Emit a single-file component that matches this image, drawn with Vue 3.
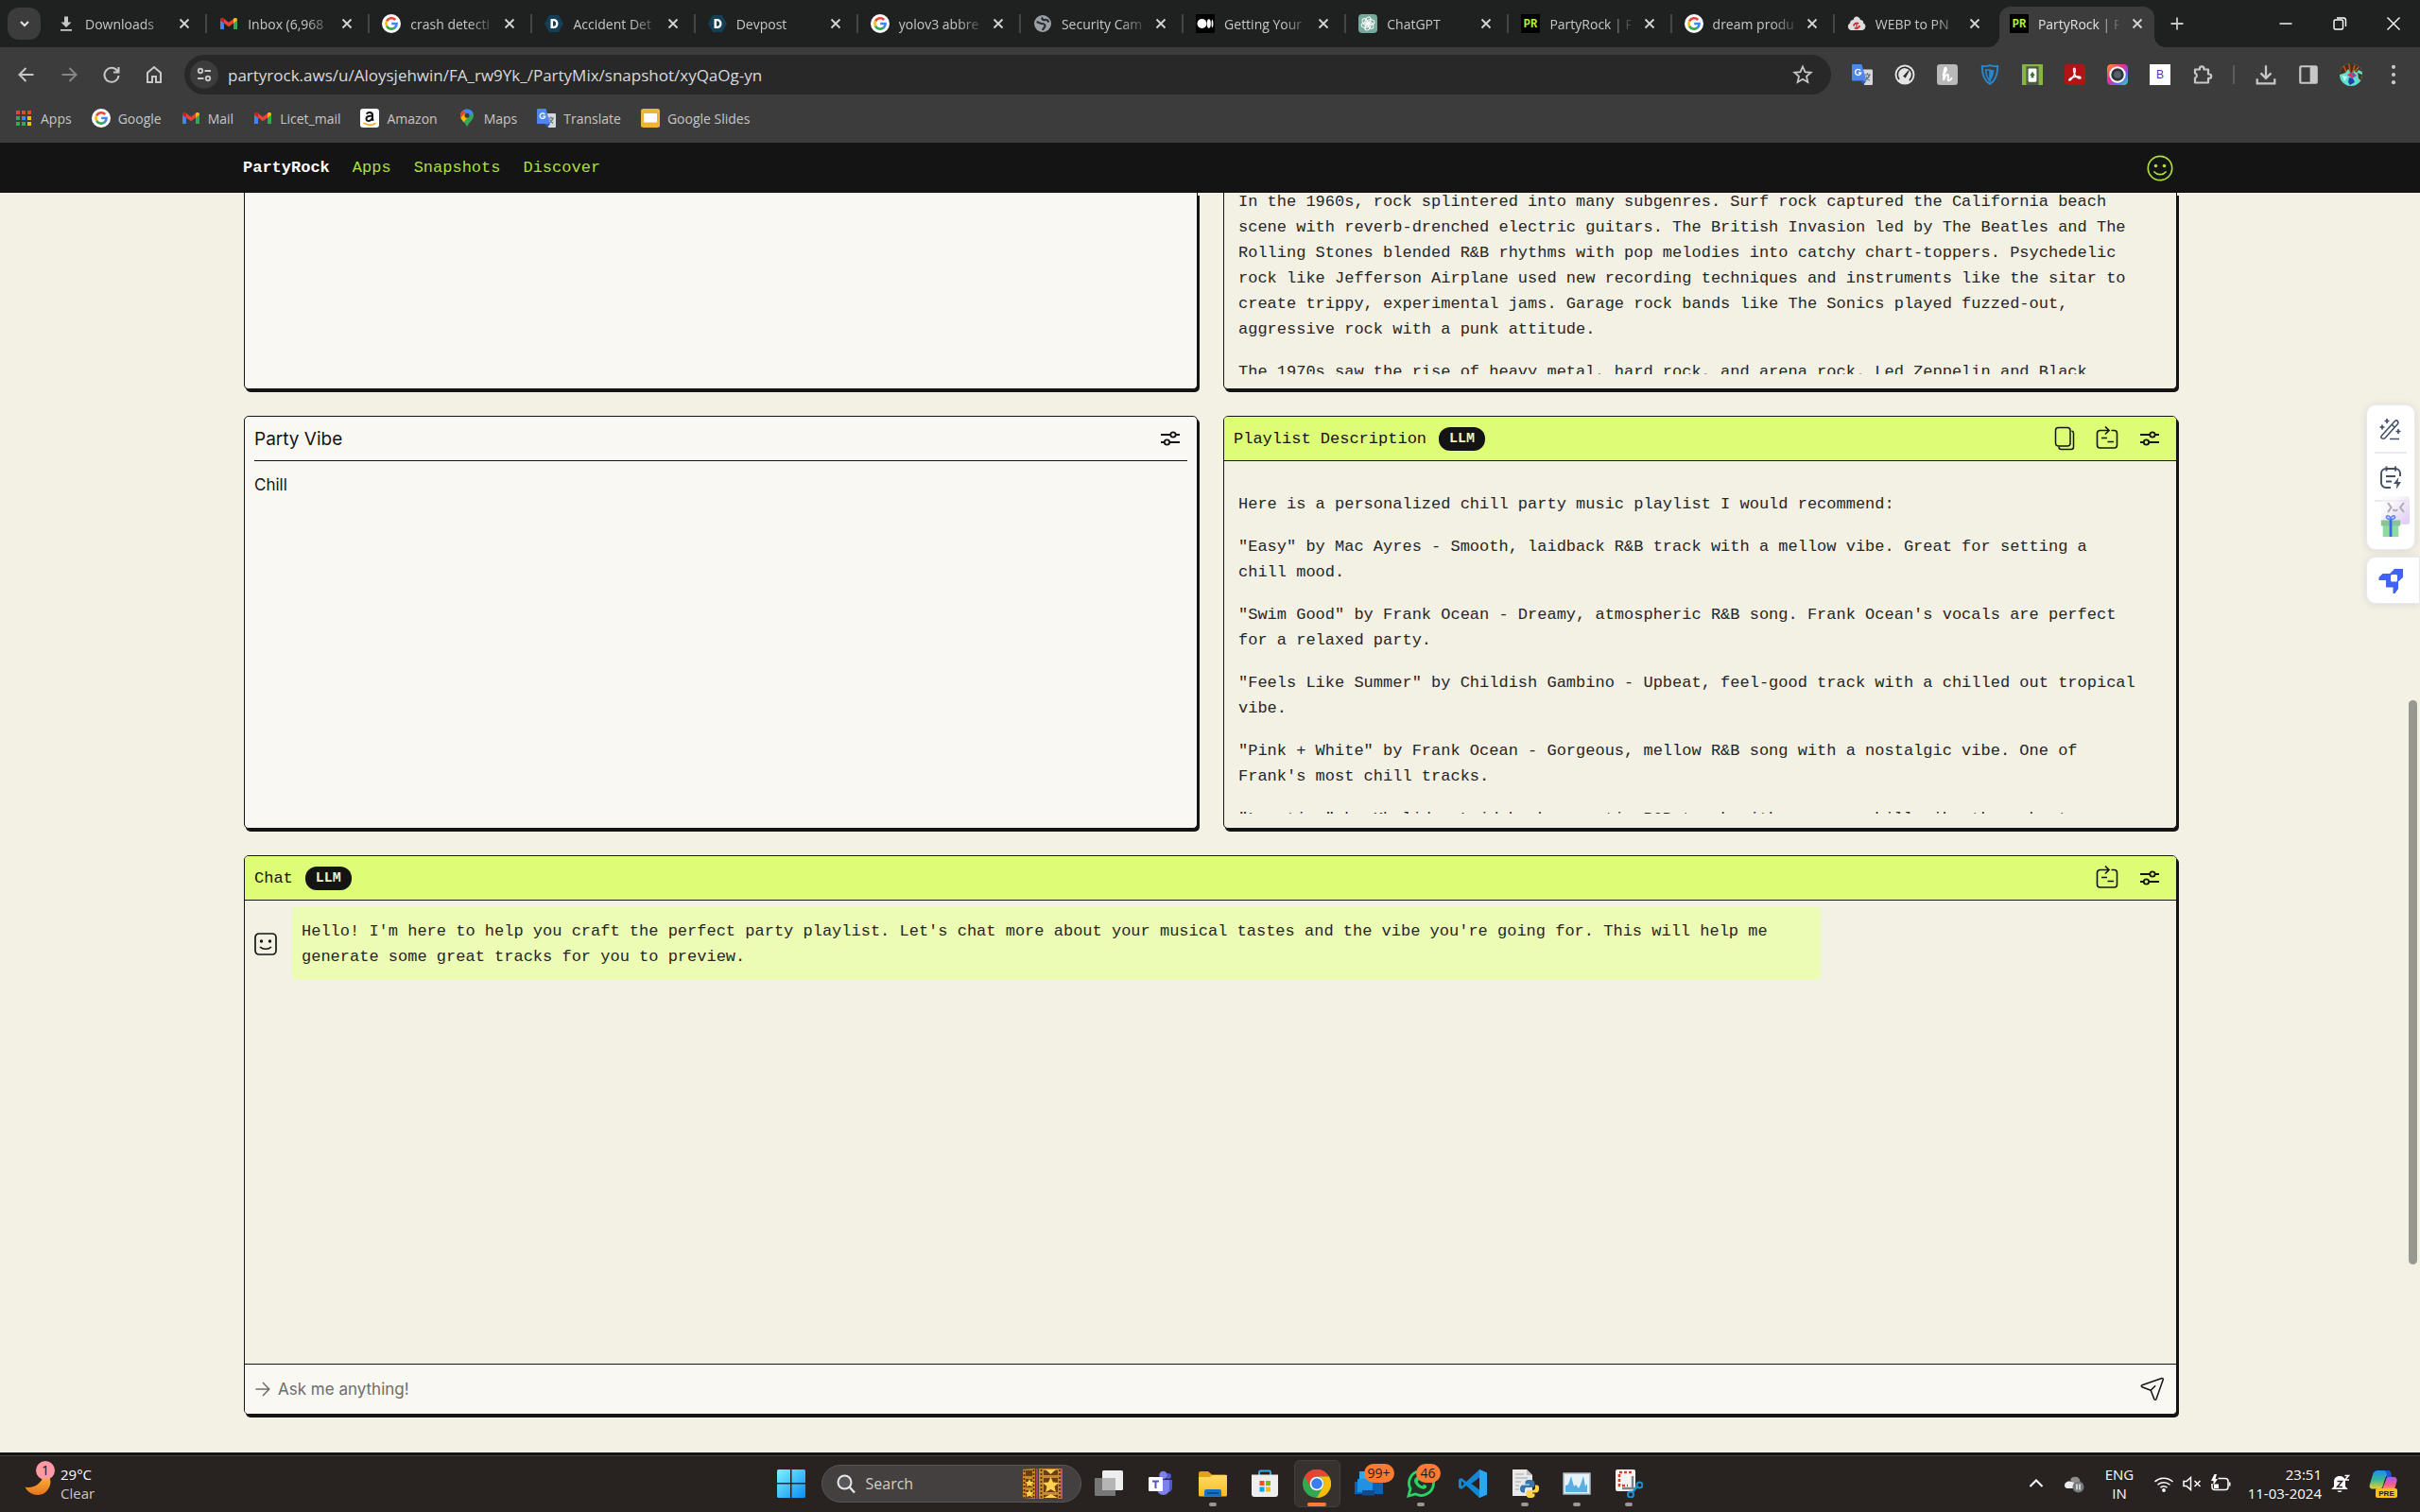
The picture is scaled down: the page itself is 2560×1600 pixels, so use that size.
<script setup>
import { ref } from 'vue'

const tabs = [
  { title: 'Downloads', icon: 'download-bar' },
  { title: 'Inbox (6,968', icon: 'gmail' },
  { title: 'crash detecti', icon: 'google' },
  { title: 'Accident Det', icon: 'devpost' },
  { title: 'Devpost', icon: 'devpost' },
  { title: 'yolov3 abbre', icon: 'google' },
  { title: 'Security Cam', icon: 'globe' },
  { title: 'Getting Your', icon: 'medium' },
  { title: 'ChatGPT', icon: 'chatgpt' },
  { title: 'PartyRock | P', icon: 'partyrock' },
  { title: 'dream produ', icon: 'google' },
  { title: 'WEBP to PN', icon: 'cloudconvert' },
  { title: 'PartyRock | P', icon: 'partyrock', active: true },
]

const bookmarks = [
  { title: 'Apps', icon: 'apps' },
  { title: 'Google', icon: 'google' },
  { title: 'Mail', icon: 'gmail' },
  { title: 'Licet_mail', icon: 'gmail' },
  { title: 'Amazon', icon: 'amazon' },
  { title: 'Maps', icon: 'maps' },
  { title: 'Translate', icon: 'translate' },
  { title: 'Google Slides', icon: 'slides' },
]

const navButtons = [
  { label: 'Back', icon: 'back' },
  { label: 'Forward', icon: 'forward', dim: true },
  { label: 'Reload', icon: 'reload' },
  { label: 'Home', icon: 'home' },
]

const extensions = [
  { label: 'Google Translate', icon: 'translate' },
  { label: 'Speed test', icon: 'gauge' },
  { label: 'Honey', icon: 'honey' },
  { label: 'VPN', icon: 'shield' },
  { label: 'Solitaire', icon: 'cards' },
  { label: 'Adobe Acrobat', icon: 'acrobat' },
  { label: 'Camera', icon: 'lens' },
  { label: 'Bookmarklet', icon: 'boxb' },
  { label: 'Extensions', icon: 'puzzle' },
]

const browserTools = [
  { label: 'Downloads', icon: 'tray' },
  { label: 'Side panel', icon: 'panel' },
  { label: 'Profile', icon: 'profile' },
  { label: 'Menu', icon: 'dots' },
]

const siteLinks = ['Apps', 'Snapshots', 'Discover']

const history = [
  `In the 1960s, rock splintered into many subgenres. Surf rock captured the California beach
scene with reverb-drenched electric guitars. The British Invasion led by The Beatles and The
Rolling Stones blended R&B rhythms with pop melodies into catchy chart-toppers. Psychedelic
rock like Jefferson Airplane used new recording techniques and instruments like the sitar to
create trippy, experimental jams. Garage rock bands like The Sonics played fuzzed-out,
aggressive rock with a punk attitude.`,
  'The 1970s saw the rise of heavy metal, hard rock, and arena rock. Led Zeppelin and Black',
]

const playlist = [
  'Here is a personalized chill party music playlist I would recommend:',
  `"Easy" by Mac Ayres - Smooth, laidback R&B track with a mellow vibe. Great for setting a
chill mood.`,
  `"Swim Good" by Frank Ocean - Dreamy, atmospheric R&B song. Frank Ocean's vocals are perfect
for a relaxed party.`,
  `"Feels Like Summer" by Childish Gambino - Upbeat, feel-good track with a chilled out tropical
vibe.`,
  `"Pink + White" by Frank Ocean - Gorgeous, mellow R&B song with a nostalgic vibe. One of
Frank's most chill tracks.`,
  '"Location" by Khalid - Laid-back romantic R&B track with a super chill vibe throughout.',
]

const greeting = `Hello! I'm here to help you craft the perfect party playlist. Let's chat more about your musical tastes and the vibe you're going for. This will help me
generate some great tracks for you to preview.`

const taskApps = [
  { label: 'Task view', icon: 'taskview' },
  { label: 'Teams', icon: 'teams' },
  { label: 'File Explorer', icon: 'explorer', open: true },
  { label: 'Microsoft Store', icon: 'store' },
  { label: 'Chrome', icon: 'chrome', active: true },
  { label: 'Phone Link', icon: 'phone', badge: '99+' },
  { label: 'WhatsApp', icon: 'whatsapp', badge: '46', open: true },
  { label: 'Visual Studio Code', icon: 'vscode' },
  { label: 'Python', icon: 'python', open: true },
  { label: 'Performance Monitor', icon: 'monitor', open: true },
  { label: 'Snipping Tool', icon: 'snip', open: true },
]

const url = ref('partyrock.aws/u/Aloysjehwin/FA_rw9Yk_/PartyMix/snapshot/xyQaOg-yn')
const question = ref('')
const search = ref('')
</script>

<template>
  <div class="screen">
    <svg class="sprite" aria-hidden="true">
      <defs>
        <linearGradient id="g-win" x1="0" y1="0" x2="1" y2="1"><stop offset="0" stop-color="#7cf3ff" /><stop offset="1" stop-color="#0a8df5" /></linearGradient>
        <linearGradient id="g-moon" x1="0" y1="0" x2="0" y2="1"><stop offset="0" stop-color="#ffc83d" /><stop offset="1" stop-color="#e8711c" /></linearGradient>
        <linearGradient id="g-lens" x1="0" y1="0" x2="1" y2="1"><stop offset="0" stop-color="#ff9a2e" /><stop offset=".4" stop-color="#f12c8e" /><stop offset=".7" stop-color="#6c5cf5" /><stop offset="1" stop-color="#2ee6a8" /></linearGradient>
        <linearGradient id="g-folder" x1="0" y1="0" x2="0" y2="1"><stop offset="0" stop-color="#ffdb63" /><stop offset="1" stop-color="#f9b81f" /></linearGradient>
        <linearGradient id="g-cop1" x1="0" y1="0" x2="0" y2="1"><stop offset="0" stop-color="#1f8df0" /><stop offset=".5" stop-color="#36b79a" /><stop offset="1" stop-color="#e9d02c" /></linearGradient>
        <linearGradient id="g-cop2" x1="0" y1="0" x2="0" y2="1"><stop offset="0" stop-color="#a55cf0" /><stop offset=".6" stop-color="#f05a9b" /><stop offset="1" stop-color="#ff9a3d" /></linearGradient>
        <linearGradient id="g-face" x1="0" y1="0" x2="1" y2="1"><stop offset=".3" stop-color="#f6f4fa" /><stop offset="1" stop-color="#c9a5ec" /></linearGradient>
      </defs>

      <symbol id="chev-down" viewBox="0 0 20 20"><path d="M6 8l4 4 4-4" fill="none" stroke="currentColor" stroke-width="2" /></symbol>
      <symbol id="close" viewBox="0 0 20 20"><path d="M5.500 5.500l9 9M14.500 5.500l-9 9" fill="none" stroke="currentColor" stroke-width="1.800" /></symbol>
      <symbol id="plus" viewBox="0 0 20 20"><path d="M10 3.500v13M3.500 10h13" stroke="currentColor" stroke-width="1.800" /></symbol>
      <symbol id="win-min" viewBox="0 0 20 20"><path d="M3.500 10h13" stroke="currentColor" stroke-width="1.400" /></symbol>
      <symbol id="win-max" viewBox="0 0 20 20"><g fill="none" stroke="currentColor" stroke-width="1.400"><rect x="4" y="6" width="9.500" height="10" rx="1.500" /><path d="M7 4h7a2.500 2.500 0 0 1 2.500 2.500V13" /></g></symbol>
      <symbol id="win-close" viewBox="0 0 20 20"><path d="M3.500 3.500l13 13M16.500 3.500l-13 13" stroke="currentColor" stroke-width="1.400" /></symbol>

      <symbol id="download-bar" viewBox="0 0 20 20"><path d="M8 2.500h4v6h3.500L10 14 4.500 8.500H8z M4 16h12v1.800H4z" fill="#c7c7c7" /></symbol>
      <symbol id="gmail" viewBox="0 0 20 20"><path d="M1 5v11h4V8.500z" fill="#4285f4" /><path d="M19 5v11h-4V8.500z" fill="#34a853" /><path d="M1 6.500C1 4 3 3.500 4.500 4.500L10 8.800l5.500-4.300C17 3.500 19 4 19 6.500l-4 3-5 3.800L5 9.500z" fill="#ea4335" /><path d="M1 6.500C1 4 3 3.500 4.500 4.500L5 5v4.500z" fill="#c5221f" /><path d="M15 5l.5-.5C17 3.500 19 4 19 6.500l-4 3z" fill="#fbbc04" /></symbol>
      <symbol id="google" viewBox="0 0 20 20"><circle cx="10" cy="10" r="10" fill="#fff" /><g fill="none" stroke-width="2.600"><path d="M14.200 6a5.600 5.600 0 0 0-9.100 1.400" stroke="#ea4335" /><path d="M5.100 7.300a5.700 5.700 0 0 0 0 5.400" stroke="#fbbc05" /><path d="M5.100 12.600a5.600 5.600 0 0 0 8.600 1.700" stroke="#34a853" /><path d="M10.200 10h5.400c0 2-.7 3.400-2 4.400" stroke="#4285f4" /></g></symbol>
      <symbol id="devpost" viewBox="0 0 20 20"><path d="M5 1h10l5 9-5 9H5l-5-9z" fill="#143f56" /><path d="M6.500 5h3.200c3 0 4.800 2 4.800 5s-1.800 5-4.800 5H6.500zM9 7.200v5.600h.8c1.400 0 2.300-1 2.300-2.800s-.9-2.800-2.300-2.800z" fill="#fff" /></symbol>
      <symbol id="globe" viewBox="0 0 20 20"><circle cx="10" cy="10" r="9" fill="#9aa0a6" /><path d="M3.500 8.500c2.500-.5 3 1.500 5.500 1.500s3.500.5 3.500 2.500-2 2-2.500 4.500M10 3.500c-1.500 2 .5 3 2.500 2.500s3 .5 4 2.500" fill="none" stroke="#2a2c2d" stroke-width="2.200" /></symbol>
      <symbol id="medium" viewBox="0 0 20 20"><rect width="20" height="20" rx="1" fill="#000" /><circle cx="6.500" cy="10" r="5" fill="#fff" /><ellipse cx="13.800" cy="10" rx="2" ry="4.700" fill="#fff" /><ellipse cx="17.500" cy="10" rx=".9" ry="4" fill="#fff" /></symbol>
      <symbol id="chatgpt" viewBox="0 0 20 20"><rect width="20" height="20" rx="4" fill="#75a99c" /><g fill="none" stroke="#fff" stroke-width="1.100"><ellipse v-for="a in [0, 60, 120, 180, 240, 300]" :key="a" cx="10" cy="6.800" rx="2.600" ry="4.100" :transform="`rotate(${a} 10 10) rotate(28 10 6.800)`" /></g></symbol>
      <symbol id="partyrock" viewBox="0 0 20 20"><rect width="20" height="20" fill="#000" /><text x="10" y="14" text-anchor="middle" font-family="Liberation Mono, monospace" font-size="12" font-weight="700" fill="#b6ee3d">PR</text></symbol>
      <symbol id="cloudconvert" viewBox="0 0 20 20"><path d="M4 17a4 4 0 0 1-1-7.500C3 7 5 6 6.500 6 7 3.500 8.500 2.500 10 2.500S13.500 4 14 6c2 0 3.500 1.500 3.200 3.500A4 4 0 0 1 16 17z" fill="#ddd" /><path d="M7 12.500a3 3 0 0 1 5-2.300M13 12a3 3 0 0 1-5 2.300" fill="none" stroke="#c3272b" stroke-width="1.800" /><path d="M10 9.500v6" stroke="#c3272b" stroke-width="1.200" /></symbol>

      <symbol id="back" viewBox="0 0 24 24"><path d="M19.500 12H5M11.500 5L4.500 12l7 7" fill="none" stroke="currentColor" stroke-width="2" /></symbol>
      <symbol id="forward" viewBox="0 0 24 24"><path d="M4.500 12H19M12.500 5l7 7-7 7" fill="none" stroke="currentColor" stroke-width="2" /></symbol>
      <symbol id="reload" viewBox="0 0 24 24"><path d="M18.500 8.500A7.500 7.500 0 1 0 19.500 13M19.500 4v5.500H14" fill="none" stroke="currentColor" stroke-width="2" /></symbol>
      <symbol id="home" viewBox="0 0 24 24"><path d="M5 20V10l7-6 7 6v10h-5v-6h-4v6z" fill="none" stroke="currentColor" stroke-width="2" /></symbol>
      <symbol id="tune" viewBox="0 0 20 20"><g fill="none" stroke="currentColor" stroke-width="1.900"><circle cx="6" cy="6" r="2.200" /><path d="M10.500 6H17M3 14h6.500" /><circle cx="14" cy="14" r="2.200" /></g></symbol>
      <symbol id="star" viewBox="0 0 24 24"><path d="M12 3.500l2.500 5.700 6.200.6-4.700 4.100 1.400 6.100L12 16.800 6.600 20 8 13.900 3.300 9.800l6.200-.6z" fill="none" stroke="currentColor" stroke-width="1.800" /></symbol>
      <symbol id="translate" viewBox="0 0 20 20"><path d="M8 5h11a1 1 0 0 1 1 1v13a1 1 0 0 1-1 1h-7z" fill="#d6d9dc" /><path d="M12 10h6M15 8.500V10M17 10c-.5 2-2 4-4 5M13.500 11.500c.7 1.600 2 3 3.500 4" stroke="#5f6b76" stroke-width="1.100" fill="none" /><path d="M1 0h8.500L14 16H1a1 1 0 0 1-1-1V1a1 1 0 0 1 1-1z" fill="#4f86ec" /><path d="M8.300 6A2.800 2.800 0 1 0 8.800 8.200H6.300" fill="none" stroke="#fff" stroke-width="1.300" /><path d="M8 16h6l-3 4z" fill="#3058b5" /></symbol>
      <symbol id="gauge" viewBox="0 0 20 20"><circle cx="10" cy="10" r="9.500" fill="#e4e4e4" /><circle cx="10" cy="10" r="7" fill="none" stroke="#2c2c2c" stroke-width="1.500" stroke-dasharray="33 11" transform="rotate(140 10 10)" /><path d="M9 11.500L14 6l-3.500 6.500z" fill="#2c2c2c" stroke="#2c2c2c" /></symbol>
      <symbol id="honey" viewBox="0 0 20 20"><rect width="20" height="20" rx="3" fill="#b9b9b9" /><path d="M6 10c2-1 4-6 2.500-6.500S6.500 9 6.500 15.500C7 12 9 9.500 10.500 10S9.500 15 11 15.500s2.500-1 3-2" fill="none" stroke="#fff" stroke-width="1.800" stroke-linecap="round" /></symbol>
      <symbol id="shield" viewBox="0 0 20 20"><path d="M10 1c2 1 5 1 7.500.8 0 8-2 14-7.500 17.200C4.500 15.800 2.500 9.800 2.500 1.800 5 2 8 2 10 1z" fill="none" stroke="#2b87cc" stroke-width="1.700" /><path d="M6 5.500h4V16C7.500 13.500 6.300 10 6 5.500z" fill="none" stroke="#2b87cc" stroke-width="1.400" /><path d="M10 5.500h4c-.3 4.500-1.500 8-4 10.500z" fill="#2b87cc" /></symbol>
      <symbol id="cards" viewBox="0 0 20 20"><rect width="20" height="20" fill="#86b544" /><rect x="4" y="2" width="12" height="18" fill="#4d5b45" /><rect x="6" y="4" width="8" height="13" rx="1" fill="#fff" /><path d="M10 7l2.500 4H11l.5 2h-3l.5-2H7.500z" fill="#2c7a2b" /></symbol>
      <symbol id="acrobat" viewBox="0 0 20 20"><rect width="20" height="20" rx="3.500" fill="#b01414" /><path d="M9 4c1.800-.5 1.500 3 .5 5.500S6 15.500 4.800 15.500s0-2 3.200-3 7.500-1 7.500.5-3.500.5-5-2S8 4.500 9 4z" fill="none" stroke="#fff" stroke-width="1.300" /></symbol>
      <symbol id="lens" viewBox="0 0 20 20"><rect width="20" height="20" rx="4" fill="url(#g-lens)" /><circle cx="10" cy="10" r="7" fill="#31343a" stroke="#fff" stroke-width="1.800" /><circle cx="10" cy="10" r="3.500" fill="#55616f" /></symbol>
      <symbol id="boxb" viewBox="0 0 20 20"><rect width="20" height="20" fill="#fff" /><text x="10" y="14" text-anchor="middle" font-family="Liberation Sans, sans-serif" font-size="11" fill="#3a3fb5">B</text></symbol>
      <symbol id="puzzle" viewBox="0 0 22 22"><path d="M3 5.500h5v-1a2.200 2.200 0 0 1 4.400 0v1H17v5h1a2.200 2.200 0 0 1 0 4.400h-1v4.600H3v-5a2.600 2.600 0 0 0 0-5z" fill="none" stroke="currentColor" stroke-width="2.200" stroke-linejoin="round" /></symbol>
      <symbol id="tray" viewBox="0 0 22 22"><path d="M11 2v12M6 9.500l5 5 5-5M2.500 15v4.500h17V15" fill="none" stroke="currentColor" stroke-width="2.100" /></symbol>
      <symbol id="panel" viewBox="0 0 22 22"><rect x="3" y="3" width="16" height="16" rx="1" fill="none" stroke="currentColor" stroke-width="2" /><path d="M12.500 3H19v16h-6.500z" fill="currentColor" /></symbol>
      <symbol id="profile" viewBox="0 0 24 24"><clipPath id="c-prof"><circle cx="12" cy="12" r="12" /></clipPath><g clip-path="url(#c-prof)"><rect width="24" height="24" fill="#5fe0cd" /><path d="M0 0h24v9l-4-2-2 3-3-3-3 4-3-5-3 4-6 2z" fill="#4a2d1c" /><path d="M4 2l3 7M10 1l1 8M16 2l-2 7M20 4l-4 5" stroke="#c8571f" stroke-width="1.500" /><path d="M8 12l6-3 4 4-5 3z" fill="#d8326b" /><path d="M10 15l4 1 2 4-5 3-2-3z" fill="#1e3fae" /><path d="M13 11l4 1-2 3z" fill="#2478e5" /><path d="M19 10l5 2v8l-4-4z" fill="#4d3a24" /><path d="M3 13l5 1-3 5z" fill="#c4fff3" /></g></symbol>
      <symbol id="dots" viewBox="0 0 22 22"><g fill="currentColor"><circle cx="11" cy="3.500" r="1.900" /><circle cx="11" cy="11" r="1.900" /><circle cx="11" cy="18.500" r="1.900" /></g></symbol>

      <symbol id="apps" viewBox="0 0 20 20"><g v-for="(row, r) in [['#ea4335', '#ea4335', '#ea4335'], ['#34a853', '#4285f4', '#fbbc05'], ['#34a853', '#34a853', '#fbbc05']]" :key="r"><rect v-for="(c, i) in row" :key="i" :x="2 + i * 6" :y="2 + r * 6" width="4" height="4" :fill="c" /></g></symbol>
      <symbol id="amazon" viewBox="0 0 20 20"><rect width="20" height="20" rx="3" fill="#fff" /><path d="M7 5.800c.5-2.400 6-2.600 6 .6v4.200c0 1 .6 1.600 1 2.100M12.800 7.500c-4.500 0-6.300 1-6.300 3.200 0 3.200 5.200 2.900 6.200-.7" fill="none" stroke="#111" stroke-width="2" /><path d="M3.500 15c4 2.800 9 2.800 13 .3" fill="none" stroke="#f90" stroke-width="1.500" /></symbol>
      <symbol id="maps" viewBox="0 0 20 20"><clipPath id="c-pin"><path d="M10 .5c4 0 7 3 7 6.800 0 5-5 6.700-7 12.200-2-5.500-7-7.200-7-12.200C3 3.500 6 .5 10 .5z" /></clipPath><g clip-path="url(#c-pin)"><rect width="20" height="20" fill="#34a853" /><path d="M3 0h14v5l-7 4-7-4z" fill="#4285f4" /><path d="M0 2l5-1 4 4-6 7z" fill="#ea4335" /><path d="M3 10l5-5 3 4-6 7z" fill="#fbbc04" /></g><circle cx="10" cy="7.300" r="2.500" fill="#3c3c3c" /></symbol>
      <symbol id="slides" viewBox="0 0 20 20"><rect width="20" height="20" rx="2.500" fill="#f0b23a" /><rect x="3" y="5" width="14" height="9.500" fill="#fff" /></symbol>

      <symbol id="smiley" viewBox="0 0 28 28"><g fill="none" stroke="currentColor" stroke-width="1.700"><circle cx="14" cy="14" r="12.700" /><path d="M8 18c3 3.500 9 3.500 12 0" stroke-linecap="round" /></g><circle cx="9.500" cy="11.500" r="1.800" fill="currentColor" /><circle cx="18.500" cy="11.500" r="1.800" fill="currentColor" /></symbol>
      <symbol id="bot" viewBox="0 0 24 24"><rect x="1" y="1" width="22" height="22" rx="4" fill="none" stroke="currentColor" stroke-width="1.700" /><path d="M6 15c3 3 9 3 12 0" fill="none" stroke="currentColor" stroke-width="1.700" /><circle cx="7.500" cy="9" r="1.700" fill="currentColor" /><circle cx="16.500" cy="9" r="1.700" fill="currentColor" /></symbol>
      <symbol id="sliders" viewBox="0 0 24 24"><g fill="none" stroke="currentColor" stroke-width="1.800"><path d="M2 8h10M18 8h4" /><circle cx="15" cy="8" r="2.700" /><path d="M2 16h3.500M11.500 16H22" /><circle cx="8.500" cy="16" r="2.700" /></g></symbol>
      <symbol id="copy" viewBox="0 0 26 26"><g fill="none" stroke="currentColor" stroke-width="1.500"><rect x="3.500" y="1.500" width="15.500" height="19.500" rx="3" /><path d="M20.500 5c1.400.3 2 1.300 2 2.500v14.500a2.500 2.500 0 0 1-2.500 2.500H9.500c-1.500 0-2.500-1-2.500-2.500" /></g></symbol>
      <symbol id="export" viewBox="0 0 26 26"><g fill="none" stroke="currentColor" stroke-width="1.600"><path d="M17.500 4.500H20.500a3 3 0 0 1 3 3V20a3 3 0 0 1-3 3H5.500a3 3 0 0 1-3-3V7.500a3 3 0 0 1 3-3H14" /><path d="M11 .5l4 4-4 4M7 12.500h6M13.500 16.500h6.500" /></g></symbol>
      <symbol id="arrow" viewBox="0 0 18 18"><path d="M1.500 9h14M9 2l6.800 7L9 16" fill="none" stroke="currentColor" stroke-width="1.500" /></symbol>
      <symbol id="send" viewBox="0 0 26 26"><path d="M2 8.700L22.800 1.500c1-.3 1.700.4 1.400 1.400L17 23.500c-.4 1-1.600 1-2.100.1l-3.700-9.300L2 10.700c-1-.5-1-1.600 0-2zM11.200 14.300l5-5" fill="none" stroke="currentColor" stroke-width="1.500" stroke-linejoin="round" /></symbol>

      <symbol id="wand" viewBox="0 0 26 26"><g fill="none" stroke="#445063" stroke-width="1.600"><path d="M3.500 20L17.500 4.500c2-1.600 4.600.8 3 3L7.500 22c-2.500 2.600-6.300.4-4-2zM14.500 8.500l2.500 2.500M12 23.500h10" /><path d="M9 2v5M6.500 4.500h5M4 8.500v5M1.500 11h5M21 13v5M18.500 15.500h5" stroke-width="1.700" /></g></symbol>
      <symbol id="notepad" viewBox="0 0 26 26"><g fill="none" stroke="#445063" stroke-width="1.900"><path d="M13 24H8a5 5 0 0 1-5-5V9a5 5 0 0 1 5-5h10a5 5 0 0 1 5 5v3M8.500 1.500v5M18 1.500v5M8 12h10M8 17.500h6" /></g><path d="M21.500 13L16 20h3.500l-.5 5.500 5-7.500h-3.500z" fill="#445063" /></symbol>
      <symbol id="gift" viewBox="0 0 24 26"><path d="M3 12h18v14H3z" fill="#8fdc9a" /><path d="M1 7h22v6.500H1z" fill="#86c694" /><path d="M10.500 6h3v20h-3z" fill="#3b66f5" /><path d="M12 6C8 6 6 4 7.500 2.500S12 3 12 6c0-3 3-5 4.500-3.500S16 6 12 6z" fill="none" stroke="#5b80f7" stroke-width="1.700" /></symbol>
      <symbol id="face" viewBox="0 0 30 30"><rect width="30" height="30" rx="3" fill="url(#g-face)" /><path d="M7 7l3.500 5L7 17M24 7l-4 5 4 5M12.500 14c1 2 3.500 2 4.500 0" fill="none" stroke="#77757f" stroke-width="2" /></symbol>
      <symbol id="rocket" viewBox="0 0 26 26"><path d="M.5 12V9l4-4h7.500l5-5H26v9l-5 4.500V21l-3.500 5h-2v-6.500H8V12z" fill="#4163f5" /><rect x="13" y="6" width="7" height="7.500" rx="1.500" fill="#fff" /></symbol>

      <symbol id="moon" viewBox="0 0 28 28"><path d="M22 1a14 14 0 1 1-21.500 16.500C8 19.500 18 16 22 1z" fill="url(#g-moon)" /></symbol>
      <symbol id="windows" viewBox="0 0 30 30"><path d="M1.500 0H14v14H0V1.500A1.500 1.500 0 0 1 1.500 0zM15.500 0H28.500A1.500 1.500 0 0 1 30 1.500V14H15.500zM0 15.500h14V30H1.500A1.500 1.500 0 0 1 0 28.500zM15.500 15.500H30v13a1.500 1.500 0 0 1-1.500 1.500h-13z" fill="url(#g-win)" /></symbol>
      <symbol id="magnifier" viewBox="0 0 22 22"><circle cx="9.500" cy="9.500" r="7" fill="#57575c" stroke="#e8e8e8" stroke-width="2" /><path d="M14.500 14.500l5.500 6" stroke="#e8e8e8" stroke-width="2.300" /></symbol>
      <symbol id="film" viewBox="0 0 42 34"><path d="M0 2l13-1v32L0 32zM17 1h25v32H17z" fill="#c98a2b" /><path d="M15 1v32M41 1v32" stroke="#c3446b" stroke-width="1.600" /><g fill="#6a3f10"><path d="M3 3h7v6H3zM3 12h7v9H3zM3 24h7v8H3zM22 3h15v5H22zM22 11h15v15H22zM22 29h15v4H22z" /></g><path d="M19.500 2v31M39 2v31M1.500 3v29M11.500 2v31" fill="none" stroke="#4a2a08" stroke-width="1.600" stroke-dasharray="2 2" /><g fill="#ffd050"><path d="M29.500 10l2.500 5.500 6 .5-4.500 4 1.500 6-5.500-3-5.500 3 1.500-6-4.500-4 6-.5zM7 12l1.500 3 3 .3-2 2 .5 3-3-1.500-3 1.500.5-3-2-2 3-.3zM7 23l1.500 3 3 .3-2 2 .5 3-3-1.500-3 1.500.5-3-2-2 3-.3zM24 2h11l-5.500 5zM22 32l7.500-4 7.500 4z" /></g></symbol>
      <symbol id="taskview" viewBox="0 0 30 30"><rect x="8" y="1" width="22" height="21" rx="1.500" fill="#eee" /><path d="M0 9h22v19H1.500A1.500 1.500 0 0 1 0 26.500z" fill="#777" /><path d="M8 9h14v13H8z" fill="#b5b5b5" /></symbol>
      <symbol id="teams" viewBox="0 0 30 30"><circle cx="23" cy="7" r="3" fill="#5059c9" /><circle cx="17.500" cy="6" r="4.200" fill="#7b83eb" /><path d="M20 11h7v8c0 3-2 5-4 5z" fill="#5059c9" /><path d="M11 11h13v9c0 4-2.500 7-6.500 7S11 24 11 20z" fill="#7b83eb" /><rect x="2" y="8" width="15" height="15" rx="1" fill="#fff" /><path d="M6 11.500h7v2h-2.500V20h-2v-6.500H6z" fill="#5558af" /></symbol>
      <symbol id="explorer" viewBox="0 0 30 30"><path d="M0 4a2 2 0 0 1 2-2h8l4 3.500h14a2 2 0 0 1 2 2V10H0z" fill="#e2a21a" /><path d="M0 8h12l2-2h16v21a1.500 1.500 0 0 1-1.500 1.500h-27A1.500 1.500 0 0 1 0 27z" fill="url(#g-folder)" /><path d="M6 28.500V23a2 2 0 0 1 2-2h14a2 2 0 0 1 2 2v5.500z" fill="#1371c8" /><path d="M9 24h12v2H9z" fill="#0b4a8c" /></symbol>
      <symbol id="store" viewBox="0 0 30 30"><path d="M9 8V3a1.500 1.500 0 0 1 1.500-1.500h9A1.500 1.500 0 0 1 21 3v5" fill="none" stroke="#35a8e8" stroke-width="2" /><path d="M1 5.500h28V26a3 3 0 0 1-3 3H4a3 3 0 0 1-3-3z" fill="#eee" /><path d="M9.500 12h5v5h-5z" fill="#f25022" /><path d="M16 12h5v5h-5z" fill="#7fba00" /><path d="M9.500 18.500h5v5h-5z" fill="#00a4ef" /><path d="M16 18.500h5v5h-5z" fill="#ffb900" /></symbol>
      <symbol id="chrome" viewBox="0 0 30 30"><circle cx="15" cy="15" r="15" fill="#34a853" /><path d="M2 7.500a15 15 0 0 1 26 0H15a7.500 7.500 0 0 0-6.500 11.200z" fill="#ea4335" /><path d="M28 7.500A15 15 0 0 1 15 30l6.500-11.200A7.500 7.500 0 0 0 15 7.500z" fill="#fbbc04" /><circle cx="15" cy="15" r="7.300" fill="#fff" /><circle cx="15" cy="15" r="5.800" fill="#3b7cf0" /></symbol>
      <symbol id="phone" viewBox="0 0 30 30"><path d="M5 2h18v17H5z" fill="#2aa9ee" /><path d="M0 13h30v13H0z" fill="#0d62b5" /><path d="M3 10h16v14H3z" fill="#2490e0" /><path d="M8 22h13v5.500H8z" fill="#114a90" /></symbol>
      <symbol id="whatsapp" viewBox="0 0 30 30"><path d="M2 28l2-7.500A13 13 0 1 1 9.500 26z" fill="#263126" stroke="#2bd366" stroke-width="2.800" /><path d="M10 8.500c1.500-1 2-.5 3 2.500l-1.200 2c1 2 2.500 3.500 4.700 4.500l1.800-1.700c3 1.300 3.200 1.700 2.700 3-.7 1.700-3 2.500-5.500 1.500-4.500-1.600-7-5-7.500-8 0-1.500.7-3 2-3.800z" fill="#2bd366" /></symbol>
      <symbol id="vscode" viewBox="0 0 30 30"><path d="M22 0l8 3.500v23L22 30 8 17l-5 4-3-1.500V10.500L3 9l5 4z" fill="#1287d3" /><path d="M22 8.500v13L13.500 15zM3 12v6l3-3z" fill="#28211f" /><path d="M22 0l8 3.500v23L22 30z" fill="#2aa7f0" /></symbol>
      <symbol id="python" viewBox="0 0 30 30"><path d="M2 0h15l6 6v22H2z" fill="#e9e9e9" /><path d="M17 0v6h6z" fill="#bdbdbd" /><path d="M5 5h9M5 9h13M5 13h6M5 17h4M5 21h4" stroke="#bcbcbc" stroke-width="1.400" /><path d="M20 11c-5 0-4.500 2-4.500 4.500H20v1h-7c-4 0-4 8 0 8h2v-3c0-2 1-2.500 3-2.500h5c2 0 2.500-1 2.500-3 0-4-1-5-5.500-5z" fill="#3776ab" /><path d="M21 30c5 0 4.500-2 4.500-4.500H21v-1h6c4 0 4-8 1-8h-2v2.500c0 2-1 3-3 3h-4c-2 0-2.500 1-2.500 3 0 3.500.5 5 4.500 5z" fill="#ffd343" /></symbol>
      <symbol id="monitor" viewBox="0 0 30 30"><rect x="1" y="4" width="28" height="22" fill="#e6f1fa" stroke="#a9b8c4" stroke-width="1.500" /><path d="M3 24v-7l3-1 3-9 3 11 2-2 3 4 2-4 3-9 2 11 2-3v9z" fill="#5aaee6" /></symbol>
      <symbol id="snip" viewBox="0 0 30 30"><rect x="1" y="0" width="21" height="23" rx="2" fill="#f4f4f4" /><path d="M18 3H5v14h9" fill="none" stroke="#d6402b" stroke-width="2.600" stroke-dasharray="3 2" /><path d="M19 7v14M8 20h14" stroke="#7f868b" stroke-width="2.400" /><circle cx="26.500" cy="16.500" r="3" fill="none" stroke="#1b93d2" stroke-width="2" /><circle cx="17" cy="26.500" r="3" fill="none" stroke="#1b93d2" stroke-width="2" /><path d="M19 24l5-6" stroke="#1b93d2" stroke-width="2" /></symbol>

      <symbol id="chev-up" viewBox="0 0 20 20"><path d="M3.500 13L10 6.500 16.500 13" fill="none" stroke="currentColor" stroke-width="2" /></symbol>
      <symbol id="cloud" viewBox="0 0 22 20"><path d="M7 6a5.500 5.500 0 0 1 10.500 2l-5 4z" fill="#8d8d8d" /><path d="M1 12c0-3 2.500-4.500 5-4.500S12 9 13 10v5H4c-2 0-3-1.500-3-3z" fill="#ececec" /><circle cx="15.500" cy="13.500" r="6" fill="#777b7d" /><path d="M14 10.500v6M17 10.500v6" stroke="#fff" stroke-width="1.300" /></symbol>
      <symbol id="wifi" viewBox="0 0 22 20"><g fill="none" stroke="currentColor" stroke-width="1.500"><path d="M1.500 8a14 14 0 0 1 19 0M4.500 11.200a10 10 0 0 1 13 0M7.500 14.200a5.500 5.500 0 0 1 7 0" /></g><circle cx="11" cy="17" r="1.900" fill="currentColor" /></symbol>
      <symbol id="mute" viewBox="0 0 22 20"><path d="M2 7.500h3l4.500-4v13l-4.500-4H2zM13.500 7l6 6M19.500 7l-6 6" fill="none" stroke="currentColor" stroke-width="1.500" /></symbol>
      <symbol id="battery" viewBox="0 0 22 20"><path d="M8.500 4.500H16a3 3 0 0 1 3 3v6a3 3 0 0 1-3 3H5a3 3 0 0 1-3-3V10" fill="none" stroke="currentColor" stroke-width="1.500" /><path d="M20 8.500h1.500v4H20zM4 10.500h5V15H4z" fill="currentColor" /><path d="M4.500 0L1 7h2.500v4.500L8 5H5.500L7 0z" fill="currentColor" /></symbol>
      <symbol id="bell" viewBox="0 0 20 20"><path d="M9 2c3.800 0 6 2.500 6 6v5l2.500 2.500v.5H.5v-.5L3 13V8c0-3.500 2.200-6 6-6zM6.500 17.500h5c-.5 2-4.500 2-5 0z" fill="currentColor" /><path d="M6.500 7.500h5l-5 6H12" fill="none" stroke="#292323" stroke-width="1.500" /><path d="M14.500 1.500h4l-4 4.500H19" fill="none" stroke="currentColor" stroke-width="1.500" /></symbol>
      <symbol id="copilot" viewBox="0 0 30 30"><path d="M10 1h9c3 0 4 1.500 4.500 4L21 6c-2 0-3 1-4 4l-2.500 8c-.7 2-2 2.500-4 2.500H4c-3 0-4-2-3-5l3-10C5 2 7 1 10 1z" fill="url(#g-cop1)" /><path d="M18 1c4 0 5 1.500 6 7h-5c0-4-1-7-4-7z" fill="#1d57d8" /><path d="M20 8h6c3 0 4 2 3.500 4.500L27 21H14l4-10c.4-2 1-3 2-3z" fill="url(#g-cop2)" /><rect x="7" y="20" width="23" height="10" rx="2" fill="#ffc20a" /><text x="18.500" y="28" text-anchor="middle" font-family="Liberation Sans, sans-serif" font-size="8" font-weight="700" fill="#1b1b1b">PRE</text></symbol>
    </svg>

    <header class="browser">
      <div class="strip">
        <button class="tab-search" aria-label="Search tabs"><svg class="i20"><use href="#chev-down" /></svg></button>
        <div class="tabs">
          <div v-for="(tab, i) in tabs" :key="i" class="tab" :class="{ active: tab.active, last: i === tabs.length - 2 }">
            <svg class="i20"><use :href="'#' + tab.icon" /></svg>
            <span class="tab-title">{{ tab.title }}</span>
            <button class="tab-close" aria-label="Close tab"><svg class="i20"><use href="#close" /></svg></button>
          </div>
        </div>
        <button class="new-tab" aria-label="New tab"><svg class="i20"><use href="#plus" /></svg></button>
        <div class="window-buttons">
          <button aria-label="Minimize"><svg class="i20"><use href="#win-min" /></svg></button>
          <button aria-label="Restore"><svg class="i20"><use href="#win-max" /></svg></button>
          <button aria-label="Close"><svg class="i20"><use href="#win-close" /></svg></button>
        </div>
      </div>

      <div class="toolbar">
        <button v-for="b in navButtons" :key="b.icon" class="tool" :class="{ dim: b.dim }" :aria-label="b.label"><svg class="i24"><use :href="'#' + b.icon" /></svg></button>
        <div class="omnibox">
          <button class="site-info" aria-label="Site information"><svg class="i20"><use href="#tune" /></svg></button>
          <input v-model="url" class="url" aria-label="Address" spellcheck="false" />
          <button class="tool" aria-label="Bookmark this tab"><svg class="i24"><use href="#star" /></svg></button>
        </div>
        <button v-for="e in extensions" :key="e.icon" class="tool" :aria-label="e.label"><svg class="i22"><use :href="'#' + e.icon" /></svg></button>
        <span class="tool-rule"></span>
        <button v-for="t in browserTools" :key="t.icon" class="tool" :aria-label="t.label"><svg class="i24"><use :href="'#' + t.icon" /></svg></button>
      </div>

      <nav class="bookmarks" aria-label="Bookmarks">
        <a v-for="b in bookmarks" :key="b.title" href="#"><svg class="i20"><use :href="'#' + b.icon" /></svg>{{ b.title }}</a>
      </nav>
    </header>

    <nav class="site-nav" aria-label="Site">
      <a href="#" class="brand">PartyRock</a>
      <a v-for="l in siteLinks" :key="l" href="#">{{ l }}</a>
      <button class="account" aria-label="Account"><svg class="i28"><use href="#smiley" /></svg></button>
    </nav>

    <main class="page">
      <section class="card light under-nav" aria-label="Input"></section>

      <section class="card under-nav" aria-label="Rock history">
        <div class="prose scrolled">
          <p v-for="(p, i) in history" :key="i">{{ p }}</p>
        </div>
      </section>

      <section class="card light">
        <div class="plain-head">
          <h2>Party Vibe</h2>
          <button class="head-button" aria-label="Edit"><svg class="i24"><use href="#sliders" /></svg></button>
        </div>
        <p class="value">Chill</p>
      </section>

      <section class="card">
        <div class="lime-head">
          <h2>Playlist Description</h2>
          <span class="pill">LLM</span>
          <div class="head-actions">
            <button class="head-button" aria-label="Copy"><svg class="i26"><use href="#copy" /></svg></button>
            <button class="head-button" aria-label="Export"><svg class="i26"><use href="#export" /></svg></button>
            <button class="head-button" aria-label="Edit"><svg class="i24"><use href="#sliders" /></svg></button>
          </div>
        </div>
        <div class="prose top">
          <p v-for="(p, i) in playlist" :key="i">{{ p }}</p>
        </div>
      </section>

      <section class="card chat">
        <div class="lime-head">
          <h2>Chat</h2>
          <span class="pill">LLM</span>
          <div class="head-actions">
            <button class="head-button" aria-label="Export"><svg class="i26"><use href="#export" /></svg></button>
            <button class="head-button" aria-label="Edit"><svg class="i24"><use href="#sliders" /></svg></button>
          </div>
        </div>
        <div class="chat-body">
          <div class="message">
            <svg class="i24"><use href="#bot" /></svg>
            <p class="bubble">{{ greeting }}</p>
          </div>
        </div>
        <form class="ask" @submit.prevent>
          <svg class="i18"><use href="#arrow" /></svg>
          <input v-model="question" aria-label="Ask a question" placeholder="Ask me anything!" />
          <button class="send" aria-label="Send"><svg class="i26"><use href="#send" /></svg></button>
        </form>
      </section>

      <div class="page-scroll"></div>
      <aside class="floaters" aria-label="Assistant">
        <div class="float-box">
          <button aria-label="Rewrite"><svg class="i26"><use href="#wand" /></svg></button>
          <hr />
          <button aria-label="Notes"><svg class="i26"><use href="#notepad" /></svg></button>
          <hr />
          <button aria-label="Gift" class="gift"><svg class="face"><use href="#face" /></svg><svg class="i24"><use href="#gift" /></svg></button>
        </div>
        <div class="float-box docked">
          <button aria-label="Launch"><svg class="i26"><use href="#rocket" /></svg></button>
        </div>
      </aside>
    </main>

    <footer class="taskbar">
      <button class="weather">
        <span class="moon"><svg class="i28"><use href="#moon" /></svg><span class="alert">1</span></span>
        <span class="two-line">29°C<small>Clear</small></span>
      </button>

      <div class="task-center">
        <button class="task" aria-label="Start"><svg class="i30"><use href="#windows" /></svg></button>
        <div class="task-search">
          <svg class="i22"><use href="#magnifier" /></svg>
          <input v-model="search" aria-label="Search" placeholder="Search" />
          <svg class="film"><use href="#film" /></svg>
        </div>
        <button v-for="a in taskApps" :key="a.icon" class="task" :class="{ current: a.active, open: a.open }" :aria-label="a.label">
          <svg class="i30"><use :href="'#' + a.icon" /></svg>
          <span v-if="a.badge" class="badge">{{ a.badge }}</span>
        </button>
      </div>

      <div class="tray">
        <button class="w40" aria-label="Hidden icons"><svg class="i20"><use href="#chev-up" /></svg></button>
        <button class="w40" aria-label="OneDrive"><svg class="i22"><use href="#cloud" /></svg></button>
        <button class="lang">ENG<br />IN</button>
        <button class="w30" aria-label="Wi-Fi"><svg class="i22"><use href="#wifi" /></svg></button>
        <button class="w30" aria-label="Volume"><svg class="i22"><use href="#mute" /></svg></button>
        <button class="w30" aria-label="Battery"><svg class="i22"><use href="#battery" /></svg></button>
        <button class="clock">23:51<br />11-03-2024</button>
        <button class="w40" aria-label="Notifications"><svg class="i20"><use href="#bell" /></svg></button>
        <button class="copilot" aria-label="Copilot"><svg class="i30"><use href="#copilot" /></svg></button>
      </div>
    </footer>
  </div>
</template>

<style>
body {
  margin: 0;
  background: #f3f0e4;
}
</style>

<style scoped>
* {
  box-sizing: border-box;
}
.screen {
  display: flex;
  flex-direction: column;
  min-height: 100vh;
  font-family: "Open Sans", "Noto Sans", sans-serif;
  font-size: 15px;
  color: #141414;
}
.sprite {
  position: absolute;
  width: 0;
  height: 0;
}
svg {
  display: block;
  flex: none;
}
button {
  display: flex;
  align-items: center;
  justify-content: center;
  padding: 0;
  border: 0;
  background: none;
  color: inherit;
  font: inherit;
  flex: none;
}
input {
  min-width: 0;
  padding: 0;
  border: 0;
  outline: 0;
  background: none;
  font: inherit;
}
a {
  color: inherit;
  text-decoration: none;
}
h2,
p {
  margin: 0;
  font-weight: 400;
}
.i18 { width: 18px; height: 18px; }
.i20 { width: 20px; height: 20px; }
.i22 { width: 22px; height: 22px; }
.i24 { width: 24px; height: 24px; }
.i26 { width: 26px; height: 26px; }
.i28 { width: 28px; height: 28px; }
.i30 { width: 30px; height: 30px; }

/* Browser chrome */
.browser {
  background: #3c3c3c;
  color: #c7c7c7;
  font-size: 14px;
}
.strip {
  display: flex;
  align-items: center;
  height: 50px;
  padding-left: 8px;
  background: #1f2120;
}
.tab-search {
  width: 35px;
  height: 34px;
  border-radius: 12px;
  background: #3c3c3c;
  color: #e3e3e3;
}
.tabs {
  display: flex;
  flex: 1;
  min-width: 0;
  margin: 0 3px 0 4px;
}
.tab {
  position: relative;
  display: flex;
  flex: 1 1 0;
  align-items: center;
  gap: 10px;
  min-width: 0;
  height: 50px;
  padding: 0 14px 0 13px;
}
.tab::after {
  content: "";
  position: absolute;
  right: 0;
  top: 15px;
  width: 2px;
  height: 20px;
  background: #444746;
}
.tab.last::after {
  display: none;
}
.tab.active {
  color: #e3e3e3;
}
.tab > * {
  z-index: 1;
}
.tab.active::before {
  content: "";
  position: absolute;
  inset: 7px 6px 0 2px;
  border-radius: 12px 12px 0 0;
  background: #3c3c3c;
}
.tab.active::after {
  inset: auto -6px 0 -10px;
  width: auto;
  height: 12px;
  background:
    radial-gradient(circle at 0 0, transparent 12px, #3c3c3c 12px) left / 12px 12px no-repeat,
    radial-gradient(circle at 100% 0, transparent 12px, #3c3c3c 12px) right / 12px 12px no-repeat;
}
.tab-title {
  flex: 1;
  min-width: 0;
  white-space: nowrap;
  mask-image: linear-gradient(to right, #000 62px, transparent 92px);
}
.tab-close {
  width: 20px;
  color: #d5d5d5;
}
.new-tab {
  width: 30px;
  height: 30px;
}
.window-buttons {
  display: flex;
  margin-left: 71px;
  color: #fff;
}
.window-buttons button {
  width: 57px;
  height: 50px;
}
.toolbar {
  display: flex;
  align-items: center;
  height: 58px;
  padding: 0 6px 0 5px;
}
.tool {
  width: 45px;
  height: 42px;
}
.tool.dim {
  color: #858585;
}
.omnibox {
  display: flex;
  flex: 1;
  align-items: center;
  height: 42px;
  margin: 0 10px;
  padding: 0 8px 0 6px;
  border-radius: 21px;
  background: #282828;
}
.site-info {
  width: 30px;
  height: 30px;
  border-radius: 15px;
  background: #3c3c3c;
}
.url {
  flex: 1;
  margin-left: 10px;
  color: #dadada;
  font-size: 17px;
}
.tool-rule {
  width: 2px;
  height: 20px;
  margin: 0 10px;
  background: #5c5c5c;
}
.bookmarks {
  display: flex;
  align-items: center;
  gap: 21px;
  height: 43px;
  padding: 0 15px 9px;
}
.bookmarks a {
  display: flex;
  align-items: center;
  gap: 8px;
}

/* Site */
.site-nav {
  display: flex;
  align-items: center;
  gap: 24px;
  height: 53px;
  padding: 0 261px 0 257px;
  background: #141414;
  color: #addf3f;
  font-family: "Liberation Mono", monospace;
  font-size: 17px;
}
.brand {
  color: #fff;
  font-weight: 700;
}
.account {
  margin-left: auto;
}
.page {
  position: relative;
  display: grid;
  flex: 1;
  grid-template-columns: 1fr 1fr;
  grid-template-rows: 208px 437px 1fr;
  gap: 28px 27px;
  padding: 0 257px 40px 258px;
  background: #f3f0e4;
}
.card {
  display: flex;
  flex-direction: column;
  min-width: 0;
  overflow: hidden;
  border: 1px solid #141414;
  border-radius: 5px;
  background: #f3f0e4;
  box-shadow: 2px 3px 0 #141414;
}
.card.light {
  background: #f9f8f3;
}
.card.under-nav {
  border-top: 0;
  border-radius: 0 0 5px 5px;
}
.card.chat {
  grid-column: 1 / -1;
}
.plain-head,
.lime-head {
  display: flex;
  align-items: center;
  flex: none;
  height: 47px;
  border-bottom: 1px solid #141414;
}
.plain-head {
  justify-content: space-between;
  margin: 0 10px;
  font-family: Inter, sans-serif;
}
.plain-head h2 {
  font-size: 19px;
}
.plain-head .head-button {
  width: 36px;
}
.lime-head {
  gap: 13px;
  padding: 0 6px 0 10px;
  background: #defd76;
  font-family: "Liberation Mono", monospace;
}
.lime-head h2 {
  font-size: 17px;
}
.pill {
  padding: 0 11px;
  border-radius: 12px;
  background: #141414;
  color: #f3f0c4;
  font-size: 15px;
  font-weight: 700;
  line-height: 25px;
}
.head-actions {
  display: flex;
  margin-left: auto;
}
.head-button {
  width: 45px;
  height: 40px;
}
.value {
  padding: 12px 10px;
  font-family: Inter, sans-serif;
  font-size: 17px;
  line-height: 27px;
}
.prose,
.bubble {
  font-family: "Liberation Mono", monospace;
  font-size: 17px;
  line-height: 27px;
  white-space: pre;
  color: #262624;
}
.prose {
  flex: 1;
  min-height: 0;
  margin-bottom: 15px;
  padding: 0 15px;
  overflow: hidden;
}
.prose.top {
  padding-top: 32px;
}
.prose p + p {
  margin-top: 18px;
}
.prose.scrolled p:first-child {
  margin-top: -4px;
}
.chat-body {
  flex: 1;
  padding: 7px 10px;
}
.message {
  display: flex;
  align-items: center;
  gap: 16px;
}
.bubble {
  width: 1617px;
  padding: 12px 10px 11px;
  border-radius: 5px;
  background: #ecfcb5;
}
.ask {
  display: flex;
  align-items: center;
  height: 53px;
  padding: 0 12px 0 10px;
  border-top: 1px solid #141414;
  background: #f9f8f3;
  color: #6d6d6a;
  font-family: Inter, sans-serif;
  font-size: 17px;
}
.ask input {
  flex: 1;
  margin-left: 7px;
}
.ask input::placeholder {
  color: #6d6d6a;
}
.send {
  color: #141414;
}

/* Overlays on the page */
.page-scroll {
  position: absolute;
  top: 537px;
  right: 3px;
  width: 9px;
  height: 597px;
  border-radius: 5px;
  background: #989891;
}
.floaters {
  position: absolute;
  top: 224px;
  right: 0;
  display: flex;
  flex-direction: column;
  gap: 7px;
  width: 57px;
}
.float-box {
  width: 52px;
  padding: 0 8px 1px;
  border: 1px solid #e6eaf2;
  border-radius: 10px;
  background: #fff;
  box-shadow: 0 1px 8px rgba(60, 60, 90, 0.12);
}
.float-box button {
  width: 34px;
  height: 49px;
}
.float-box hr {
  margin: 0;
  border: 0;
  border-top: 2px solid #e8eaee;
}
.float-box .gift {
  position: relative;
}
.gift .face {
  position: absolute;
  left: 7px;
  top: -6px;
  width: 30px;
  height: 30px;
  opacity: 0.6;
}
.gift .i24 {
  position: relative;
}
.float-box.docked {
  width: 57px;
  height: 50px;
  padding: 0 8px;
  border-radius: 10px 0 0 10px;
}

/* Taskbar */
.taskbar {
  display: grid;
  grid-template-columns: 1fr auto 1fr;
  align-items: center;
  height: 63px;
  border-top: 3px solid #141414;
  background: #282220;
  box-shadow: inset 0 1px 0 #45413f;
  color: #fff;
}
.weather {
  justify-self: start;
  gap: 10px;
  padding-left: 26px;
}
.moon {
  position: relative;
}
.alert {
  position: absolute;
  left: 12px;
  top: -10px;
  width: 20px;
  border-radius: 10px;
  background: #ff99a4;
  color: #141414;
  font-size: 14px;
  line-height: 20px;
}
.two-line {
  display: flex;
  flex-direction: column;
  text-align: left;
  line-height: 20px;
}
.two-line small {
  color: #c8c8c8;
  font-size: 15px;
}
.task-center {
  display: flex;
  align-items: center;
}
.task {
  position: relative;
  width: 55px;
  height: 50px;
}
.task.current::before {
  content: "";
  position: absolute;
  inset: 0 3px;
  border: 1px solid #45403f;
  border-radius: 6px;
  background: #38322f;
}
.task .i30 {
  position: relative;
}
.task.open::after,
.task.current::after {
  content: "";
  position: absolute;
  bottom: 1px;
  width: 8px;
  height: 4px;
  border-radius: 2px;
  background: #9c9894;
}
.task.current::after {
  width: 20px;
  background: #ff7b33;
}
.badge {
  position: absolute;
  left: 22px;
  top: 4px;
  min-width: 26px;
  padding: 0 4px;
  border-radius: 10px;
  background: #ff7b33;
  color: #1b1b1b;
  font-size: 14px;
  line-height: 20px;
}
.task-search {
  display: flex;
  align-items: center;
  width: 275px;
  height: 40px;
  margin: 0 2px 0 4px;
  padding: 0 19px 0 14px;
  border: 1px solid #5b5655;
  border-radius: 20px;
  background: #454040;
}
.task-search input {
  flex: 1;
  margin-left: 10px;
  color: #fff;
  font-size: 16px;
}
.task-search input::placeholder {
  color: #d0cecd;
}
.film {
  width: 42px;
  height: 34px;
}
.tray {
  display: flex;
  align-items: center;
  justify-self: end;
  padding-right: 24px;
  line-height: 20px;
}
.w40 { width: 40px; }
.w30 { width: 30px; }
.lang {
  width: 60px;
  padding-right: 4px;
}
.clock {
  width: 92px;
  text-align: right;
  justify-content: flex-end;
}
.copilot {
  margin-left: 10px;
}
</style>
